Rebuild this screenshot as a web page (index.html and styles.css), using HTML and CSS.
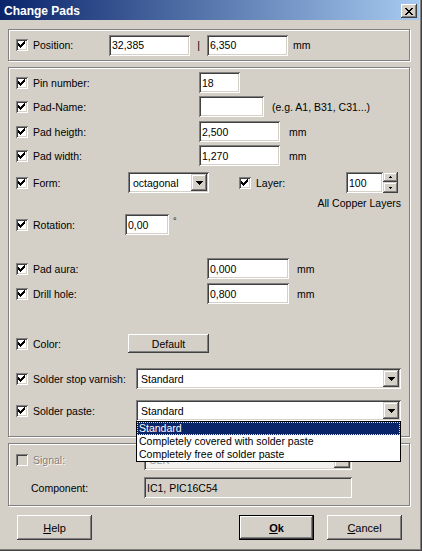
FILE: index.html
```html
<!DOCTYPE html>
<html>
<head>
<meta charset="utf-8">
<title>Change Pads</title>
<link rel="stylesheet" href="styles.css">
</head>
<body>
<div class="win">
  <div class="titlebar">
    <span class="title">Change Pads</span>
    <span class="close"><svg width="8" height="7" viewBox="0 0 8 7"><path d="M0 0h2v1h-2z M6 0h2v1h-2z M1 1h2v1h-2z M5 1h2v1h-2z M2 2h4v1h-4z M3 3h2v1h-2z M2 4h4v1h-4z M1 5h2v1h-2z M5 5h2v1h-2z M0 6h2v1h-2z M6 6h2v1h-2z" fill="#000"/></svg></span>
  </div>

  <div class="group g1">
    <span class="cb"><svg class="chk" width="12" height="12" viewBox="0 0 12 12"><path d="M2 4h1v3h-1z M3 5h1v3h-1z M4 6h1v3h-1z M5 5h1v3h-1z M6 4h1v3h-1z M7 3h1v3h-1z M8 2h1v3h-1z"/></svg></span>
    <span class="lbl c109">Position:</span>
    <span class="edit w81">32,385</span>
    <span class="sep">|</span>
    <span class="edit w81">6,350</span>
    <span class="unit u5">mm</span>
  </div>

  <div class="group g2">
    <div class="row">
      <span class="cb"><svg class="chk" width="12" height="12" viewBox="0 0 12 12"><path d="M2 4h1v3h-1z M3 5h1v3h-1z M4 6h1v3h-1z M5 5h1v3h-1z M6 4h1v3h-1z M7 3h1v3h-1z M8 2h1v3h-1z"/></svg></span>
      <span class="lbl c199">Pin number:</span>
      <span class="edit w41">18</span>
    </div>
    <div class="row mt3">
      <span class="cb"><svg class="chk" width="12" height="12" viewBox="0 0 12 12"><path d="M2 4h1v3h-1z M3 5h1v3h-1z M4 6h1v3h-1z M5 5h1v3h-1z M6 4h1v3h-1z M7 3h1v3h-1z M8 2h1v3h-1z"/></svg></span>
      <span class="lbl c199">Pad-Name:</span>
      <span class="edit w65"></span>
      <span class="unit u8">(e.g. A1, B31, C31...)</span>
    </div>
    <div class="row mt4">
      <span class="cb"><svg class="chk" width="12" height="12" viewBox="0 0 12 12"><path d="M2 4h1v3h-1z M3 5h1v3h-1z M4 6h1v3h-1z M5 5h1v3h-1z M6 4h1v3h-1z M7 3h1v3h-1z M8 2h1v3h-1z"/></svg></span>
      <span class="lbl c199">Pad heigth:</span>
      <span class="edit w81">2,500</span>
      <span class="unit u9">mm</span>
    </div>
    <div class="row mt3">
      <span class="cb"><svg class="chk" width="12" height="12" viewBox="0 0 12 12"><path d="M2 4h1v3h-1z M3 5h1v3h-1z M4 6h1v3h-1z M5 5h1v3h-1z M6 4h1v3h-1z M7 3h1v3h-1z M8 2h1v3h-1z"/></svg></span>
      <span class="lbl c199">Pad width:</span>
      <span class="edit w81">1,270</span>
      <span class="unit u9">mm</span>
    </div>
    <div class="row mt6">
      <span class="cb"><svg class="chk" width="12" height="12" viewBox="0 0 12 12"><path d="M2 4h1v3h-1z M3 5h1v3h-1z M4 6h1v3h-1z M5 5h1v3h-1z M6 4h1v3h-1z M7 3h1v3h-1z M8 2h1v3h-1z"/></svg></span>
      <span class="lbl c128">Form:</span>
      <span class="combo w81">
        <span class="combo-text">octagonal</span>
        <span class="arrow"><svg width="7" height="4" viewBox="0 0 7 4"><path d="M0 0h7v1h-7z M1 1h5v1h-5z M2 2h3v1h-3z M3 3h1v1h-1z"/></svg></span>
      </span>
      <span class="cb ml30"><svg class="chk" width="12" height="12" viewBox="0 0 12 12"><path d="M2 4h1v3h-1z M3 5h1v3h-1z M4 6h1v3h-1z M5 5h1v3h-1z M6 4h1v3h-1z M7 3h1v3h-1z M8 2h1v3h-1z"/></svg></span>
      <span class="lbl c346">Layer:</span>
      <span class="edit w37">100</span>
      <span class="spin">
        <span class="spin-btn"><svg width="3" height="2" viewBox="0 0 3 2"><path d="M1 0h1v1h-1z M0 1h3v1h-3z"/></svg></span>
        <span class="spin-btn"><svg width="3" height="2" viewBox="0 0 3 2"><path d="M0 0h3v1h-3z M1 1h1v1h-1z"/></svg></span>
      </span>
    </div>
    <div class="row row-note mt3">
      <span class="note">All Copper Layers</span>
    </div>
    <div class="row mt4">
      <span class="cb"><svg class="chk" width="12" height="12" viewBox="0 0 12 12"><path d="M2 4h1v3h-1z M3 5h1v3h-1z M4 6h1v3h-1z M5 5h1v3h-1z M6 4h1v3h-1z M7 3h1v3h-1z M8 2h1v3h-1z"/></svg></span>
      <span class="lbl c125">Rotation:</span>
      <span class="edit w44">0,00</span>
      <span class="deg">°</span>
    </div>
    <div class="row mt23">
      <span class="cb"><svg class="chk" width="12" height="12" viewBox="0 0 12 12"><path d="M2 4h1v3h-1z M3 5h1v3h-1z M4 6h1v3h-1z M5 5h1v3h-1z M6 4h1v3h-1z M7 3h1v3h-1z M8 2h1v3h-1z"/></svg></span>
      <span class="lbl c207">Pad aura:</span>
      <span class="edit w82">0,000</span>
      <span class="unit u8">mm</span>
    </div>
    <div class="row mt4">
      <span class="cb"><svg class="chk" width="12" height="12" viewBox="0 0 12 12"><path d="M2 4h1v3h-1z M3 5h1v3h-1z M4 6h1v3h-1z M5 5h1v3h-1z M6 4h1v3h-1z M7 3h1v3h-1z M8 2h1v3h-1z"/></svg></span>
      <span class="lbl c207">Drill hole:</span>
      <span class="edit w82">0,800</span>
      <span class="unit u8">mm</span>
    </div>
    <div class="row mt29">
      <span class="cb"><svg class="chk" width="12" height="12" viewBox="0 0 12 12"><path d="M2 4h1v3h-1z M3 5h1v3h-1z M4 6h1v3h-1z M5 5h1v3h-1z M6 4h1v3h-1z M7 3h1v3h-1z M8 2h1v3h-1z"/></svg></span>
      <span class="lbl c128">Color:</span>
      <span class="btn btn-color">Default</span>
    </div>
    <div class="row mt14">
      <span class="cb"><svg class="chk" width="12" height="12" viewBox="0 0 12 12"><path d="M2 4h1v3h-1z M3 5h1v3h-1z M4 6h1v3h-1z M5 5h1v3h-1z M6 4h1v3h-1z M7 3h1v3h-1z M8 2h1v3h-1z"/></svg></span>
      <span class="lbl c136">Solder stop varnish:</span>
      <span class="combo w265">
        <span class="combo-text">Standard</span>
        <span class="arrow"><svg width="7" height="4" viewBox="0 0 7 4"><path d="M0 0h7v1h-7z M1 1h5v1h-5z M2 2h3v1h-3z M3 3h1v1h-1z"/></svg></span>
      </span>
    </div>
    <div class="row mt11">
      <span class="cb"><svg class="chk" width="12" height="12" viewBox="0 0 12 12"><path d="M2 4h1v3h-1z M3 5h1v3h-1z M4 6h1v3h-1z M5 5h1v3h-1z M6 4h1v3h-1z M7 3h1v3h-1z M8 2h1v3h-1z"/></svg></span>
      <span class="lbl c136">Solder paste:</span>
      <span class="combo w265 open">
        <span class="combo-text">Standard</span>
        <span class="arrow"><svg width="7" height="4" viewBox="0 0 7 4"><path d="M0 0h7v1h-7z M1 1h5v1h-5z M2 2h3v1h-3z M3 3h1v1h-1z"/></svg></span>
        <span class="droplist">
          <span class="item sel"><span class="focus">Standard</span></span>
          <span class="item">Completely covered with solder paste</span>
          <span class="item">Completely free of solder paste</span>
        </span>
      </span>
    </div>
  </div>

  <div class="group g3">
    <div class="row">
      <span class="cb cb-dis"></span>
      <span class="lbl lbl-dis c144">Signal:</span>
      <span class="combo combo-dis w208">
        <span class="combo-text">CLK</span>
        <span class="arrow"><svg width="8" height="5" viewBox="0 0 8 5"><path d="M1 1h7v1h-7z M2 2h5v1h-5z M3 3h3v1h-3z M4 4h1v1h-1z" fill="#fff"/><path d="M0 0h7v1h-7z M1 1h5v1h-5z M2 2h3v1h-3z M3 3h1v1h-1z" fill="#808080"/></svg></span>
      </span>
    </div>
    <div class="row mt7">
      <span class="lbl lbl-comp">Component:</span>
      <span class="edit edit-ro w208">IC1, PIC16C54</span>
    </div>
  </div>

  <div class="buttons">
    <span class="btn btn-main"><u>H</u>elp</span>
    <span class="btn btn-main btn-default"><b><u>O</u>k</b></span>
    <span class="btn btn-main btn-cancel"><u>C</u>ancel</span>
  </div>
</div>
</body>
</html>
```

FILE: styles.css
```css
* { box-sizing: border-box; }
html, body { margin: 0; padding: 0; }
body {
  width: 422px;
  height: 551px;
  overflow: hidden;
  background: #d4d0c8;
  font-family: "Liberation Sans", Arial, sans-serif;
  font-size: 10.5px;
  color: #000;
}
.win {
  width: 422px;
  height: 551px;
  border-right: 1px solid #404040;
  border-bottom: 1px solid #404040;
  box-shadow: inset -1px -1px #808080;
}
.titlebar {
  height: 20px;
  margin-right: 2px;
  padding: 2px 2px 0 4px;
  display: flex;
  align-items: center;
  justify-content: space-between;
  background: linear-gradient(to right, #0a246a, #a6caf0);
}
.title { color: #fff; font-weight: bold; font-size: 12px; }
.close {
  width: 16px;
  height: 14px;
  display: flex;
  align-items: center;
  justify-content: center;
  background: #d4d0c8;
  box-shadow: inset -1px -1px #404040, inset 1px 1px #fff, inset -2px -2px #808080, inset 2px 2px #d4d0c8;
}

.group {
  width: 402px;
  margin-left: 8px;
  border: 1px solid #808080;
  box-shadow: inset 1px 1px #fff, 1px 1px #fff;
}
.g1 {
  margin-top: 9px;
  height: 32px;
  padding-left: 7px;
  display: flex;
  align-items: center;
}
.g2 { margin-top: 6px; padding: 4px 0 15px 7px; }
.g3 { margin-top: 6px; padding: 5px 0 7px 7px; }

.row { display: flex; align-items: center; height: 21px; }
.row-note { height: 14px; justify-content: flex-end; padding-right: 8px; }
.mt3 { margin-top: 3px; }
.mt4 { margin-top: 4px; }
.mt6 { margin-top: 6px; }
.mt7 { margin-top: 7px; }
.mt11 { margin-top: 11px; }
.mt14 { margin-top: 14px; }
.mt23 { margin-top: 23px; }
.mt29 { margin-top: 29px; }

.cb {
  flex: none;
  width: 12px;
  height: 12px;
  background: #fff;
  box-shadow: inset 1px 1px #808080, inset -1px -1px #fff, inset 2px 2px #404040, inset -2px -2px #d4d0c8;
}
.cb .chk { display: block; fill: #000; }
.cb-dis { background: #d4d0c8; }
.ml30 { margin-left: 30px; }

.lbl { flex: none; margin-left: 5px; white-space: nowrap; }
.lbl-dis { color: #808080; text-shadow: 1px 1px #fff; }
.lbl-comp { margin-left: 15px; width: 113px; }
.c109 { width: 76px; }
.c199 { width: 166px; }
.c128 { width: 95px; }
.c125 { width: 92px; }
.c207 { width: 174px; }
.c136 { width: 103px; }
.c144 { width: 111px; }
.c346 { width: 90px; }

.edit {
  flex: none;
  height: 21px;
  padding: 0 2px 0 3px;
  display: flex;
  align-items: center;
  background: #fff;
  white-space: nowrap;
  box-shadow: inset 1px 1px #808080, inset -1px -1px #fff, inset 2px 2px #404040, inset -2px -2px #d4d0c8;
}
.edit-ro { background: #d4d0c8; }
.w37 { width: 37px; }
.w41 { width: 41px; }
.w44 { width: 44px; }
.w65 { width: 65px; }
.w81 { width: 81px; }
.w82 { width: 82px; }
.w208 { width: 208px; }
.w265 { width: 265px; }

.sep { width: 17px; text-align: center; }
.unit { white-space: nowrap; }
.u5 { margin-left: 5px; }
.u8 { margin-left: 8px; }
.u9 { margin-left: 9px; }
.deg { margin-left: 4px; align-self: flex-start; margin-top: 2px; font-size: 9px; }
.note { white-space: nowrap; }

.combo {
  flex: none;
  position: relative;
  height: 21px;
  padding: 2px;
  display: flex;
  align-items: center;
  background: #fff;
  box-shadow: inset 1px 1px #808080, inset -1px -1px #fff, inset 2px 2px #404040, inset -2px -2px #d4d0c8;
}
.combo-dis { background: #f2f1ee; }
.combo-dis .combo-text { color: #a0a0a0; }
.combo-text { flex: 1; padding-left: 3px; white-space: nowrap; overflow: hidden; }
.arrow {
  flex: none;
  width: 16px;
  height: 17px;
  display: flex;
  align-items: center;
  justify-content: center;
  background: #d4d0c8;
  box-shadow: inset -1px -1px #404040, inset 1px 1px #d4d0c8, inset -2px -2px #808080, inset 2px 2px #fff;
}
.arrow svg { display: block; fill: #000; }

.droplist {
  position: absolute;
  z-index: 10;
  top: 100%;
  left: 0;
  width: 100%;
  border: 1px solid #000;
  background: #fff;
  display: flex;
  flex-direction: column;
}
.item {
  height: 13px;
  line-height: 13px;
  padding-left: 2px;
  white-space: nowrap;
}
.item.sel { background: #0a246a; color: #fff; padding-left: 0; }
.focus {
  display: block;
  height: 13px;
  padding-left: 2px;
  outline: 1px dotted #e8e4a0;
  outline-offset: -1px;
}

.spin { flex: none; display: flex; flex-direction: column; }
.spin-btn {
  width: 15px;
  height: 10px;
  display: flex;
  align-items: center;
  justify-content: center;
  background: #d4d0c8;
  box-shadow: inset -1px -1px #404040, inset 1px 1px #d4d0c8, inset -2px -2px #808080, inset 2px 2px #fff;
}
.spin-btn + .spin-btn { height: 11px; }
.spin-btn svg { display: block; fill: #000; }

.btn {
  display: flex;
  align-items: center;
  justify-content: center;
  background: #d4d0c8;
  white-space: nowrap;
  box-shadow: inset -1px -1px #404040, inset 1px 1px #fff, inset -2px -2px #808080, inset 2px 2px #d4d0c8;
}
.btn-color { width: 81px; height: 19px; }

.buttons {
  margin-top: 9px;
  padding: 0 19px 0 17px;
  display: flex;
  align-items: center;
}
.btn-main { width: 75px; height: 25px; font-size: 11px; }
.btn-default { margin-left: auto; border: 1px solid #000; }
.btn-cancel { margin-left: 13px; }
u { text-decoration: underline; text-underline-offset: 1px; }
```
